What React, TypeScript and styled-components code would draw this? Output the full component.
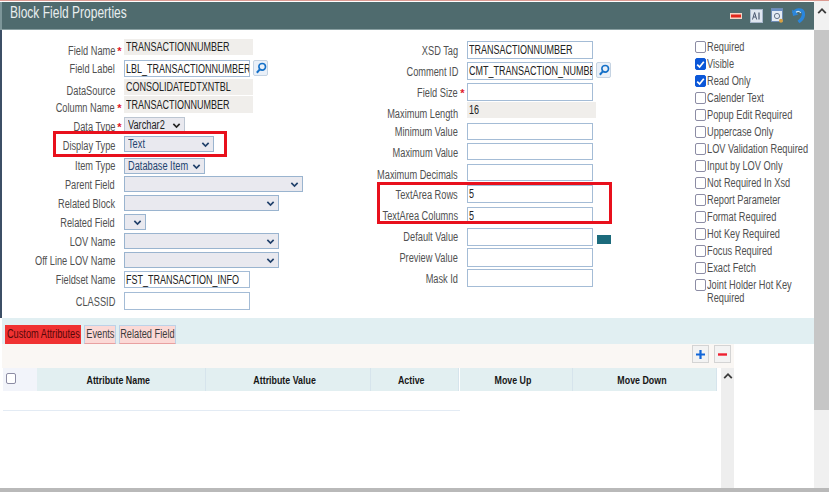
import React from "react";
import styled, { createGlobalStyle } from "styled-components";

const FONT = `"Liberation Sans", Arial, sans-serif`;
const SQUEEZE = 0.77;

const Global = createGlobalStyle`
  html, body { margin: 0; padding: 0; background: #c4c4c4; }
  * { box-sizing: border-box; }
  body { font-family: ${FONT}; overflow: hidden; }
`;

const Screen = styled.div`
  width: 829px;
  height: 492px;
  display: flex;
  flex-direction: column;
  background: #b9b9b9;
`;
const Win = styled.div`
  height: 488px;
  display: flex;
  background: #fff;
  border-top: 1px solid #dc9a92;
`;
const Content = styled.div`
  width: 814px;
  display: flex;
  flex-direction: column;
`;
const Squeezed = styled.span<{ $from?: string }>`
  display: inline-block;
  flex: none;
  white-space: pre;
  transform: scaleX(${SQUEEZE});
  transform-origin: ${(p) => p.$from ?? "left"} center;
`;
const Header = styled.div`
  height: 28px;
  margin-top: 1px;
  background: #4f6b6e;
  border-bottom: 1px solid #8aa0a2;
  border-left: 2px solid #7d9699;
  display: flex;
  align-items: center;
  justify-content: space-between;
  padding: 0 9px 0 8px;
`;
const Title = styled.div`
  color: #e9eeee;
  font-size: 15.6px;
  padding-bottom: 5px;
`;
const HeaderIcons = styled.div`
  display: flex;
  align-items: center;
  gap: 8px;
`;
const Form = styled.div`
  position: relative;
  height: 288px;
  display: grid;
  grid-template-columns: 330px 365px 1fr;
  box-shadow: inset 2px 0 0 #3c4f66;
`;
const Col = styled.div<{ $top: number }>`
  padding-top: ${(p) => p.$top}px;
  display: flex;
  flex-direction: column;
`;
const Row = styled.div<{ $h: number }>`
  height: ${(p) => p.$h}px;
  display: flex;
  align-items: flex-start;
`;
const Label = styled.div<{ $w: number; $dy: number }>`
  width: ${(p) => p.$w}px;
  margin-top: ${(p) => p.$dy}px;
  display: flex;
  justify-content: flex-end;
  color: #505050;
  font-size: 12px;
  line-height: 14px;
  flex: none;
`;
const Star = styled.span<{ $w: number; $dy: number }>`
  width: ${(p) => p.$w}px;
  margin-top: ${(p) => p.$dy}px;
  flex: none;
  color: #e0182c;
  font-size: 11px;
  line-height: 14px;
  text-align: center;
  font-weight: bold;
`;
const InputBox = styled.div<{ $w: number; $fh: number; $ro?: boolean }>`
  width: ${(p) => p.$w}px;
  height: ${(p) => p.$fh}px;
  flex: none;
  overflow: hidden;
  border: ${(p) => (p.$ro ? "none" : "1px solid #a4bcd6")};
  background: ${(p) => (p.$ro ? "#f0eeeb" : "#fff")};
  padding-left: ${(p) => (p.$ro ? 2 : 1)}px;
`;
const InputEl = styled.input`
  display: block;
  width: 160%;
  height: 100%;
  border: none;
  background: transparent;
  color: #222;
  font-family: ${FONT};
  font-size: 12px;
  padding: 0;
  outline: none;
  transform: scaleX(0.75);
  transform-origin: left center;
`;
const Dropdown = styled.div<{ $w: number; $fh: number; $blue?: boolean }>`
  width: ${(p) => p.$w}px;
  height: ${(p) => p.$fh}px;
  flex: none;
  border: 1px solid ${(p) => (p.$blue ? "#9ab4cf" : "#bcc6d2")};
  background: #e9e9ef;
  color: ${(p) => (p.$blue ? "#23436e" : "#222")};
  font-size: 12px;
  display: flex;
  align-items: center;
  padding: 0 3px;
  overflow: hidden;
  svg { flex: none; margin-left: auto; }
`;
const DropText = styled(Squeezed)`
  margin-right: -20px;
`;
const SearchBtn = styled.button`
  width: 15px;
  height: 16px;
  margin-left: 3px;
  padding: 0;
  border: 1px solid #c5d3e2;
  border-radius: 2px;
  background: #eaf0f8;
  display: flex;
  align-items: center;
  justify-content: center;
`;
const Swatch = styled.div`
  width: 14px;
  height: 9px;
  margin: 7px 0 0 4px;
  background: #1c6b7c;
`;
const CheckList = styled.div`
  padding: 8px 0 0 0;
  display: flex;
  flex-direction: column;
`;
const CheckRow = styled.label`
  display: flex;
  align-items: flex-start;
  min-height: 17px;
  color: #505050;
  font-size: 12px;
  line-height: 12.5px;
  padding-top: 3px;
`;
const Box = styled.span<{ $on?: boolean }>`
  width: 11px;
  height: 12px;
  margin-right: 1px;
  flex: none;
  border: 1px solid ${(p) => (p.$on ? "#0b57d8" : "#8c8ca4")};
  border-radius: 2px;
  background: ${(p) => (p.$on ? "#0b57d8" : "#fff")};
  display: flex;
  align-items: center;
  justify-content: center;
`;
const Highlight = styled.div<{ $l: number; $t: number; $w: number; $h: number }>`
  position: absolute;
  left: ${(p) => p.$l}px;
  top: ${(p) => p.$t}px;
  width: ${(p) => p.$w}px;
  height: ${(p) => p.$h}px;
  border: 3px solid #e8101c;
  pointer-events: none;
`;
const TabStrip = styled.div`
  height: 26px;
  background: #e1eff2;
  margin-left: 2px;
  display: flex;
  align-items: flex-start;
  gap: 3px;
  padding: 7px 0 0 3px;
`;
const Tab = styled.div<{ $active?: boolean; $w: number }>`
  width: ${(p) => p.$w}px;
  height: 19px;
  border: 1px solid ${(p) => (p.$active ? "#f03232" : "#bcd2e8")};
  border-bottom-color: ${(p) => (p.$active ? "#f03232" : "#e8a0a0")};
  background: ${(p) => (p.$active ? "#f03232" : "#fbd9d6")};
  color: ${(p) => (p.$active ? "#560808" : "#3c3c3c")};
  font-size: 12px;
  line-height: 17px;
  display: flex;
  justify-content: center;
`;
const Lower = styled.div`
  flex: 1;
  display: flex;
  flex-direction: column;
  width: 734px;
  padding-left: 3px;
`;
const Tools = styled.div`
  height: 24px;
  margin-left: -1px;
  background: #faf7f4;
  display: flex;
  justify-content: flex-end;
  gap: 5px;
  padding: 1px 3px 0 0;
`;
const ToolBtn = styled.button`
  width: 17px;
  height: 18px;
  padding: 0;
  border: 1px solid #d4d4d4;
  background: #f3f3f3;
  display: flex;
  align-items: center;
  justify-content: center;
`;
const TableArea = styled.div`
  flex: 1;
  display: flex;
`;
const Table = styled.div`
  width: 714px;
`;
const HeadRow = styled.div`
  height: 23px;
  display: grid;
  grid-template-columns: 34px 169px 165px 88px 1px 113px 144px;
`;
const CheckCell = styled.div`
  background: #f2f4fa;
  padding: 5px 0 0 3px;
`;
const HeadBox = styled.span`
  display: block;
  width: 10px;
  height: 11px;
  border: 1px solid #8c8ca4;
  border-radius: 2px;
  background: #fff;
`;
const HeadCell = styled.div`
  background: #e2eff1;
  border-right: 1px solid #d6e4ec;
  color: #161616;
  font-size: 11.5px;
  font-weight: 700;
  display: flex;
  align-items: center;
  justify-content: center;
  padding-right: 6px;
`;
const Gap = styled.div`
  background: #fff;
`;
const BodyRow = styled.div`
  width: 457px;
  height: 20px;
  border-bottom: 1px solid #e3ebf4;
`;
const SideScroll = styled.div`
  width: 13px;
  margin-left: 4px;
  background: #eeeeee;
  display: flex;
  justify-content: center;
  align-items: flex-start;
  padding-top: 4px;
`;
const PageScroll = styled.div`
  width: 15px;
  display: flex;
  flex-direction: column;
  background: #f0f0f0;
`;
const ScrollUp = styled.div`
  height: 29px;
  background: #f1f1f1;
  display: flex;
  justify-content: center;
  padding-top: 6px;
`;
const Thumb = styled.div`
  height: 380px;
  background: #c6c6c6;
`;

const Chevron = ({ c = "#1f3f6a", s = 9 }: { c?: string; s?: number }) => (
  <svg width={s} height={s} viewBox="0 0 10 10" fill="none">
    <path d="M1.5 3.2 5 6.8 8.5 3.2" stroke={c} strokeWidth="1.8" />
  </svg>
);
const Up = () => (
  <svg width="10" height="8" viewBox="0 0 10 8" fill="none">
    <path d="M1.2 6.2 5 2.2 8.8 6.2" stroke="#3a3a3a" strokeWidth="1.8" />
  </svg>
);
const Search = () => (
  <svg width="12" height="12" viewBox="0 0 13 13" fill="none">
    <circle cx="7.8" cy="5.2" r="3.6" stroke="#1470c8" strokeWidth="1.8" />
    <path d="M5.2 8 2 11.6" stroke="#1470c8" strokeWidth="2.2" />
  </svg>
);
const Tick = () => (
  <svg width="9" height="9" viewBox="0 0 9 9" fill="none">
    <path d="M1.2 4.6 3.6 7 7.8 1.8" stroke="#fff" strokeWidth="1.7" />
  </svg>
);
const MinusIcon = () => (
  <svg width="12" height="6" viewBox="0 0 12 6">
    <rect width="12" height="6" fill="#f4d4c4" />
    <rect x="1" y="1.5" width="10" height="3" fill="#e0261c" />
  </svg>
);
const AiIcon = () => (
  <svg width="13" height="14" viewBox="0 0 13 14">
    <rect x="0.5" y="0.5" width="12" height="13" fill="#dfe6f0" stroke="#a8b8cc" />
    <path d="M2.5 10.5 4.6 3.5 6.7 10.5M3.3 8h2.6" stroke="#4a5870" strokeWidth="1" fill="none" />
    <path d="M9 3.5v7" stroke="#4a5870" strokeWidth="1.2" />
  </svg>
);
const DocIcon = () => (
  <svg width="13" height="15" viewBox="0 0 13 15">
    <rect x="0.5" y="0.5" width="11" height="13" fill="#e4ebf4" stroke="#6f8cb4" />
    <rect x="1" y="1" width="10" height="2" fill="#6a8fc4" />
    <circle cx="6" cy="8" r="2.6" fill="none" stroke="#66758a" strokeWidth="1" />
    <circle cx="10" cy="12.8" r="2" fill="#d8a040" />
  </svg>
);
const BackIcon = () => (
  <svg width="13" height="15" viewBox="0 0 13 15" fill="none">
    <path d="M1.5 5.5C3.5 1.5 9.5 0.5 11 4 12.3 7.5 10.5 11 6.5 14" stroke="#2a86dc" strokeWidth="3.2" />
    <path d="M0 1.5 1 8 6.5 6.5" fill="#2a86dc" />
    <path d="M4 4.2C5.8 3 8.2 3.2 8.6 5" stroke="#c8e6fa" strokeWidth="1.2" />
  </svg>
);
const Plus = () => (
  <svg width="11" height="11" viewBox="0 0 11 11">
    <path d="M5.5 1v9M1 5.5h9" stroke="#1266d8" strokeWidth="2.2" />
  </svg>
);
const Minus = () => (
  <svg width="11" height="11" viewBox="0 0 11 11">
    <path d="M1 5.5h9" stroke="#ee2030" strokeWidth="2.4" />
  </svg>
);

type Kind = "ro" | "in" | "dd";
type F = {
  label: string; h: number; fh: number; dy: number; w: number; kind: Kind;
  value?: string; star?: boolean; blue?: boolean; search?: boolean; swatch?: boolean;
};

const left: F[] = [
  { label: "Field Name", h: 21, fh: 16, dy: 5, w: 129, kind: "ro", value: "TRANSACTIONNUMBER", star: true },
  { label: "Field Label", h: 19, fh: 17, dy: 2, w: 126, kind: "in", value: "LBL_TRANSACTIONNUMBER", search: true },
  { label: "DataSource", h: 17, fh: 16, dy: 5, w: 129, kind: "ro", value: "CONSOLIDATEDTXNTBL" },
  { label: "Column Name", h: 21, fh: 17, dy: 5, w: 129, kind: "ro", value: "TRANSACTIONNUMBER", star: true },
  { label: "Data Type", h: 19, fh: 16, dy: 3, w: 61, kind: "dd", value: "Varchar2", star: true },
  { label: "Display Type", h: 22, fh: 16, dy: 3, w: 90, kind: "dd", value: "Text", blue: true },
  { label: "Item Type", h: 18, fh: 16, dy: 1, w: 81, kind: "dd", value: "Database Item", blue: true },
  { label: "Parent Field", h: 19, fh: 16, dy: 2, w: 179, kind: "dd", blue: true },
  { label: "Related Block", h: 19, fh: 16, dy: 2, w: 155, kind: "dd", blue: true },
  { label: "Related Field", h: 19, fh: 16, dy: 2, w: 22, kind: "dd", blue: true },
  { label: "LOV Name", h: 19, fh: 16, dy: 2, w: 155, kind: "dd", blue: true },
  { label: "Off Line LOV Name", h: 19, fh: 16, dy: 2, w: 155, kind: "dd", blue: true },
  { label: "Fieldset Name", h: 21, fh: 17, dy: 2, w: 126, kind: "in", value: "FST_TRANSACTION_INFO" },
  { label: "CLASSID", h: 18, fh: 18, dy: 3, w: 126, kind: "in" },
];

const middle: F[] = [
  { label: "XSD Tag", h: 21, fh: 18, dy: 3, w: 126, kind: "in", value: "TRANSACTIONNUMBER" },
  { label: "Comment ID", h: 21, fh: 18, dy: 3, w: 126, kind: "in", value: "CMT_TRANSACTION_NUMBE", search: true },
  { label: "Field Size", h: 19, fh: 18, dy: 3, w: 126, kind: "in", star: true },
  { label: "Maximum Length", h: 21, fh: 16, dy: 5, w: 129, kind: "ro", value: "16" },
  { label: "Minimum Value", h: 20, fh: 17, dy: 2, w: 126, kind: "in" },
  { label: "Maximum Value", h: 21, fh: 17, dy: 3, w: 126, kind: "in" },
  { label: "Maximum Decimals", h: 21, fh: 17, dy: 4, w: 126, kind: "in" },
  { label: "TextArea Rows", h: 22, fh: 18, dy: 3, w: 126, kind: "in", value: "5" },
  { label: "TextArea Columns", h: 21, fh: 17, dy: 2, w: 126, kind: "in", value: "5" },
  { label: "Default Value", h: 20, fh: 18, dy: 2, w: 126, kind: "in", swatch: true },
  { label: "Preview Value", h: 21, fh: 19, dy: 3, w: 126, kind: "in" },
  { label: "Mask Id", h: 18, fh: 18, dy: 3, w: 126, kind: "in" },
];

const checks: [string, boolean][] = [
  ["Required", false], ["Visible", true], ["Read Only", true], ["Calender Text", false],
  ["Popup Edit Required", false], ["Uppercase Only", false], ["LOV Validation Required", false],
  ["Input by LOV Only", false], ["Not Required In Xsd", false], ["Report Parameter", false],
  ["Format Required", false], ["Hot Key Required", false], ["Focus Required", false],
  ["Exact Fetch", false], ["Joint Holder Hot Key\nRequired", false],
];

const Field = ({ f }: { f: F }) => {
  if (f.kind === "dd")
    return (
      <Dropdown $w={f.w} $fh={f.fh} $blue={f.blue}>
        <DropText>{f.value}</DropText>
        <Chevron c={f.blue ? "#1f3f6a" : "#222"} />
      </Dropdown>
    );
  return (
    <InputBox $w={f.w} $fh={f.fh} $ro={f.kind === "ro"}>
      <InputEl value={f.value ?? ""} readOnly />
    </InputBox>
  );
};

const Fields = ({ rows, lw, sw }: { rows: F[]; lw: number; sw: number }) => (
  <>
    {rows.map((f) => (
      <Row key={f.label} $h={f.h}>
        <Label $w={lw} $dy={f.dy}><Squeezed $from="right">{f.label}</Squeezed></Label>
        <Star $w={sw} $dy={f.dy}>{f.star ? "*" : ""}</Star>
        <Field f={f} />
        {f.search && <SearchBtn type="button" aria-label="Search"><Search /></SearchBtn>}
        {f.swatch && <Swatch />}
      </Row>
    ))}
  </>
);

const columns = ["Attribute Name", "Attribute Value", "Active"];

export default function App() {
  return (
    <Screen>
      <Global />
      <Win>
        <Content>
          <Header>
            <Title><Squeezed>Block Field Properties</Squeezed></Title>
            <HeaderIcons>
              <MinusIcon />
              <AiIcon />
              <DocIcon />
              <BackIcon />
            </HeaderIcons>
          </Header>
          <Form>
            <Col $top={9}>
              <Fields rows={left} lw={115} sw={9} />
            </Col>
            <Col $top={11}>
              <Fields rows={middle} lw={128} sw={9} />
            </Col>
            <CheckList>
              {checks.map(([t, on]) => (
                <CheckRow key={t}>
                  <Box $on={on}>{on && <Tick />}</Box>
                  <Squeezed>{t}</Squeezed>
                </CheckRow>
              ))}
            </CheckList>
            <Highlight $l={53} $t={101} $w={174} $h={26} />
            <Highlight $l={377} $t={152} $w={235} $h={42} />
          </Form>
          <TabStrip>
            <Tab $active $w={76}><Squeezed $from="center">Custom Attributes</Squeezed></Tab>
            <Tab $w={32}><Squeezed $from="center">Events</Squeezed></Tab>
            <Tab $w={57}><Squeezed $from="center">Related Field</Squeezed></Tab>
          </TabStrip>
          <Lower>
            <Tools>
              <ToolBtn type="button" aria-label="Add"><Plus /></ToolBtn>
              <ToolBtn type="button" aria-label="Remove"><Minus /></ToolBtn>
            </Tools>
            <TableArea>
              <Table>
                <HeadRow>
                  <CheckCell><HeadBox /></CheckCell>
                  {columns.map((c) => <HeadCell key={c}><Squeezed $from="center">{c}</Squeezed></HeadCell>)}
                  <Gap />
                  <HeadCell><Squeezed $from="center">Move Up</Squeezed></HeadCell>
                  <HeadCell><Squeezed $from="center">Move Down</Squeezed></HeadCell>
                </HeadRow>
                <BodyRow />
              </Table>
              <SideScroll><Up /></SideScroll>
            </TableArea>
          </Lower>
        </Content>
        <PageScroll>
          <ScrollUp><Up /></ScrollUp>
          <Thumb />
        </PageScroll>
      </Win>
    </Screen>
  );
}
